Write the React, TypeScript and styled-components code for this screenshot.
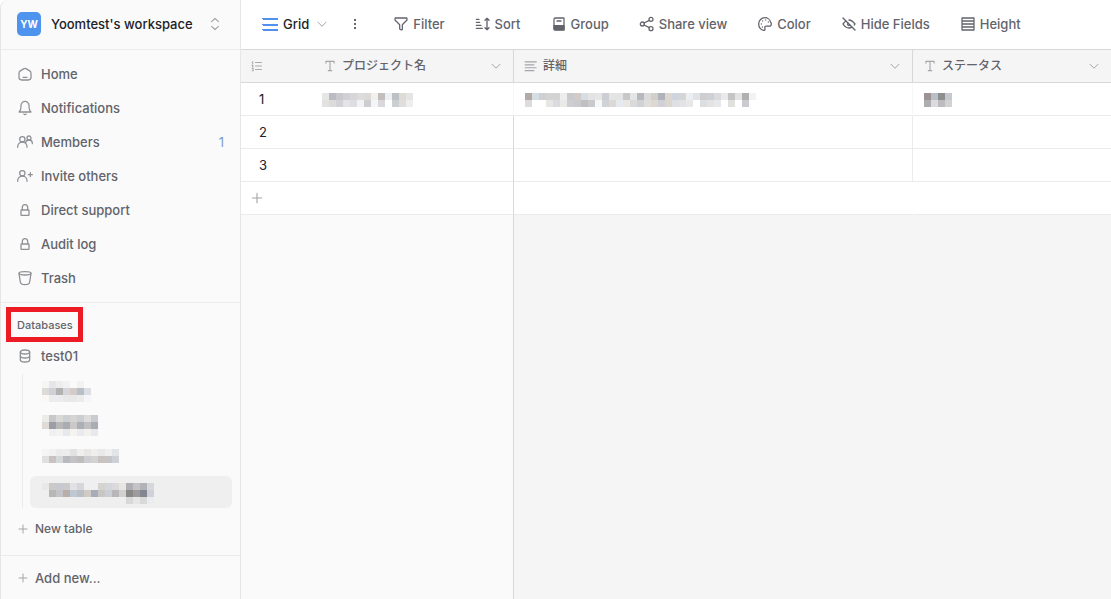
import React from 'react';
import styled, { createGlobalStyle } from 'styled-components';

const GlobalStyle = createGlobalStyle`
  *, *::before, *::after { box-sizing: border-box; }
  body {
    margin: 0;
    background: #fff;
    color: #202128;
    font-family: Inter, "Noto Sans CJK JP", sans-serif;
    font-size: 13px;
    line-height: 20px;
    font-weight: 500;
  }
  button {
    margin: 0;
    padding: 0;
    border: 0;
    background: none;
    font: inherit;
    color: inherit;
    cursor: pointer;
  }
  a { color: inherit; text-decoration: none; }
  ul { margin: 0; padding: 0; list-style: none; }
  svg { display: block; flex: none; }
`;

/* ---------- icons ---------- */

const Svg = styled.svg<{ $size?: number; $weight?: number }>`
  width: ${(p) => p.$size ?? 16}px;
  height: ${(p) => p.$size ?? 16}px;
  fill: none;
  stroke: currentColor;
  stroke-width: ${(p) => p.$weight ?? 1.9};
  stroke-linecap: round;
  stroke-linejoin: round;
`;

type IconProps = { paths: string[]; size?: number; weight?: number };

const Icon = ({ paths, size, weight }: IconProps) => (
  <Svg viewBox="0 0 24 24" $size={size} $weight={weight} aria-hidden="true">
    {paths.map((d) => (
      <path key={d} d={d} />
    ))}
  </Svg>
);

const person = [
  'M1 20V19C1 15.134 4.134 12 8 12C11.866 12 15 15.134 15 19V20',
  'M8 12C10.209 12 12 10.209 12 8C12 5.791 10.209 4 8 4C5.791 4 4 5.791 4 8C4 10.209 5.791 12 8 12Z',
];

const icons = {
  home: [
    'M17 21H7C4.791 21 3 19.209 3 17V10.708C3 9.309 3.731 8.012 4.927 7.287L9.927 4.256C11.201 3.484 12.799 3.484 14.073 4.256L19.073 7.287C20.269 8.012 21 9.309 21 10.708V17C21 19.209 19.209 21 17 21Z',
    'M9 17H15',
  ],
  bell: [
    'M18 8.4C18 6.703 17.368 5.075 16.243 3.875C15.117 2.674 13.591 2 12 2C10.409 2 8.883 2.674 7.757 3.875C6.632 5.075 6 6.703 6 8.4C6 15.867 3 18 3 18H21C21 18 18 15.867 18 8.4Z',
    'M13.73 21C13.37 21.62 12.71 22 12 22C11.29 22 10.63 21.62 10.27 21',
  ],
  members: [
    ...person,
    'M13 14C13 11.239 15.239 9 18 9C20.761 9 23 11.239 23 14V14.5',
    'M18 9C19.657 9 21 7.657 21 6C21 4.343 19.657 3 18 3C16.343 3 15 4.343 15 6C15 7.657 16.343 9 18 9Z',
  ],
  invite: [...person, 'M17 10H23M20 7V13'],
  lock: [
    'M16 12H17.4C17.731 12 18 12.269 18 12.6V19.4C18 19.731 17.731 20 17.4 20H6.6C6.269 20 6 19.731 6 19.4V12.6C6 12.269 6.269 12 6.6 12H8M16 12V8C16 6.667 15.2 4 12 4C8.8 4 8 6.667 8 8V12M16 12H8',
  ],
  trash: [
    'M3 5C3 3.600 7 2.500 12 2.500C17 2.500 21 3.600 21 5C21 6.400 17 7.500 12 7.500C7 7.500 3 6.400 3 5Z',
    'M3 5L5 18C5.300 20.800 8.500 22 12 22C15.500 22 18.700 20.800 19 18L21 5',
  ],
  database: [
    'M5 12V18C5 18 5 21 12 21C19 21 19 18 19 18V12',
    'M5 6V12C5 12 5 15 12 15C19 15 19 12 19 12V6',
    'M12 3C19 3 19 6 19 6C19 6 19 9 12 9C5 9 5 6 5 6C5 6 5 3 12 3Z',
  ],
  plus: ['M4 12H20M12 4V20'],
  upDown: ['M6 8L12 2.500L18 8', 'M6 16L12 21.500L18 16'],
  chevron: ['M4 8.500L12 16.500L20 8.500'],
  filter: [
    'M4 3H20C20.552 3 21 3.448 21 4V5.586C21 5.851 20.895 6.105 20.707 6.293L14.293 12.707C14.105 12.895 14 13.149 14 13.414V19.719C14 20.370 13.388 20.847 12.757 20.689L10.757 20.189C10.312 20.078 10 19.678 10 19.219V13.414C10 13.149 9.895 12.895 9.707 12.707L3.293 6.293C3.105 6.105 3 5.851 3 5.586V4C3 3.448 3.448 3 4 3Z',
  ],
  sort: [
    'M2 5H6M2 9.500H7M2 14H9M2 18.500H11',
    'M18 3.500V20.500M15 6.500L18 3.500L21 6.500M15 17.500L18 20.500L21 17.500',
  ],
  share: [
    'M18 22C19.657 22 21 20.657 21 19C21 17.343 19.657 16 18 16C16.343 16 15 17.343 15 19C15 20.657 16.343 22 18 22Z',
    'M18 8C19.657 8 21 6.657 21 5C21 3.343 19.657 2 18 2C16.343 2 15 3.343 15 5C15 6.657 16.343 8 18 8Z',
    'M5 15C6.657 15 8 13.657 8 12C8 10.343 6.657 9 5 9C3.343 9 2 10.343 2 12C2 13.657 3.343 15 5 15Z',
    'M15.500 6.500L7.500 10.500M7.500 13.500L15.500 17.500',
  ],
  palette: [
    'M20.510 9.540C19.550 5.380 15.500 2.500 12 2.500C6.700 2.500 2.500 6.700 2.500 12C2.500 17.200 6 21.500 10 21.500C11.500 21.500 12.300 20.600 12 19.500L11.700 18C11.400 16.400 12.400 15.200 14 15.200H18.500C20.500 15.200 21.500 13.400 21.500 11.500C21.500 10.800 21 10 20.510 9.540Z',
    'M6.500 12.010V12M8.500 7.510V7.500M13 6.010V6M17 9.010V9M8 16.510V16.500',
  ],
  eyeOff: [
    'M3 3L21 21',
    'M10.500 10.677C9.640 11.510 9.700 12.730 10.480 13.520C11.300 14.330 12.500 14.300 13.323 13.500',
    'M7.362 7.561C5.680 8.740 4.279 10.420 3 12C4.889 14.991 8.282 18 12 18C13.550 18 14.998 17.490 16.287 16.704M12 6C16.008 6 18.701 9.158 21 12C20.681 12.499 20.320 12.998 19.922 13.482',
  ],
  height: [
    'M3 3H21V21H3ZM3 7.500H21M3 12H21M3 16.500H21',
  ],
  text: ['M5 7V4H19V7M12 4V20M9 20H15'],
  longText: ['M2 5H21M2 10H17M2 15H21M2 20H17'],
  count: ['M9 5H21M9 12H21M9 19H21M2 4L3.500 3V8M2 10.500H4V12L2 14H4.500M2 17H4.500V21.500H2'],
};

const GridIcon = () => (
  <Svg viewBox="0 0 16 16" $weight={1} shapeRendering="crispEdges" aria-hidden="true">
    <path d="M0.500 2.500H15.500M0.500 8.500H15.500M0.500 13.500H15.500" strokeWidth="2" />
  </Svg>
);

const DotsIcon = () => (
  <Svg viewBox="0 0 16 16" aria-hidden="true">
    <path d="M7 3h2v2H7zM7 7h2v2H7zM7 11h2v2H7z" fill="currentColor" stroke="none" />
  </Svg>
);

const GroupIcon = () => (
  <Svg viewBox="0 0 24 24" aria-hidden="true">
    <path d="M4.500 19V5C4.500 3.895 5.300 3 6.500 3H19C19.331 3 19.500 3.269 19.500 3.600V20.500H6C5.200 20.500 4.500 19.900 4.500 19Z" />
    <path d="M4.500 14.500H19.500V21H6C5.100 21 4.500 20.200 4.500 19Z" fill="currentColor" />
    <path d="M9 7.500H15" />
  </Svg>
);

/* ---------- redacted text ---------- */

const CELL = 7;

const Mosaic = ({ rows }: { rows: string[] }) => {
  const cells = rows.map((row) => row.split(' '));
  const width = Math.max(...cells.map((c) => c.length)) * CELL;
  const height = cells.length * CELL;
  return (
    <svg width={width} height={height} shapeRendering="crispEdges" role="img" aria-label="redacted">
      {cells.map((row, y) =>
        row.map((color, x) =>
          color === '-' ? null : (
            <rect key={`${x}-${y}`} x={x * CELL} y={y * CELL} width={CELL} height={CELL} fill={`#${color}`} />
          ),
        ),
      )}
    </svg>
  );
};

const tables = [
  {
    rows: [
      'f5f5f3 e4e6e8 ededee f2f2f2 - f2f2f2 -',
      'dddbda cfd1d7 b2b2b2 d6d6da d4ccc7 b8bfc7 dcdee3',
      'faf7f5 ececee ececef e8e8e8 e9e9e9 ececec f5f6f9',
    ],
  },
  {
    rows: [
      'ebebea c8c8ca d9d9d8 cdcfd2 d4d4d4 cccdd0 dcdcdc c8cbd0',
      'e0dad4 9b9ea6 b8b8b9 a9adb2 ccc8c8 acb0b6 c0c0c2 a9adb3',
      '- eef0f2 f3f2f0 e6e8ec f5f2f0 e8eaee f3f1ef e6e8ec',
    ],
  },
  {
    rows: [
      'f5f5f5 f2f1ef ebebeb ededed e2e2e2 efeff0 e8e7e5 eeeeee e9e9ea efefef e3e4e6',
      'e0e0e0 c8c3c2 d4d8d8 b9bac0 c3c3c5 bfbebd cdcdd2 d3d3d4 c9c3c0 c5c5c8 cdd1d5',
    ],
  },
  {
    active: true,
    rows: [
      'e8e8e6 cccac9 c8c9cf cacacb e1e1e6 d6d6d8 efeff1 - d5d3cf d4d7da dadadc e9e5e1 aeafb5 c5c3c5 b2b3b7 d6d8de',
      '- b8b7b7 c3c3c8 b8afaa bdc8d2 bcbfc6 d1cbc5 a8acba c8c6c4 cbced2 b8b6b8 d2d1d2 8a8989 9f9b9d 828690 cfd0d8',
      '- - - - - - - - - - - - d8d8d8 e6e6e6 d9d9d9 ebecef',
    ],
  },
];

const firstRow = {
  name: [
    'e6e6e4 bbbcc3 c9c9cb d1d1d3 d7d7da dcdcdd dcdad8 f0f0ee c3bebb ebf0f7 bdc1c4 dedbd7 e4e4e4',
    'e3e2e0 dcdcdd d2d3d6 e4e4e5 dddee2 f1f3f5 cecdd1 f3f5f7 d9d8db - cccfd2 e0dedc eeeeee',
  ],
  detail: [
    'b3aaa4 d5dde5 d0d0d1 d3d3d3 d3d3d3 ededed c9cacf d1ccc9 d8dde1 e3e3e3 e6e6e7 cbcfd3 e4e4e4 e3e3e3 c7c7c8 e4e5e6 b7b8be dbdbdc d2cfcb b0b3bb dcd7cf cfd5de d5d5d6 ebeef3 dfe2e6 d0cdce cdd0d5 dbdbdd e9e9e9 c4c4c5 e3e3e3 b0b0b1 f3f3f3',
    'dddbdd - - e8e6e4 dadbdf ebe9e7 cdced2 cbcbcd bfc0c2 c9cacc f7f7f7 cfd2d6 dbd8d5 e6eaef e9e6e3 dadada d0d2d5 e0dedc ddd8d2 cfd1d6 dbd7cf dfe0e4 e3e3e4 e8e8e8 - dcdfe2 e5e3e1 e6e8ec - e2e0dd - cbcccf -',
  ],
  status: ['9c9494 b9bfc4 8d8e90 c6c8d0', 'adadb2 dddbdd bcbcbf d2d2d4'],
};

/* ---------- layout ---------- */

const Page = styled.div`
  display: flex;
  min-height: 100vh;
`;

const Sidebar = styled.aside`
  display: flex;
  flex: none;
  flex-direction: column;
  width: 241px;
  border: solid #e6e6e6;
  border-width: 0 1px;
  border-top-left-radius: 8px;
  background: #fafafa;
  color: #62636b;
`;

const Workspace = styled.button`
  display: flex;
  align-items: center;
  width: 100%;
  height: 50px;
  padding: 0 18px 2px 16px;
  border-bottom: 1px solid #ebebeb;
  color: #202128;
  text-align: left;
`;

const Avatar = styled.span`
  width: 24px;
  height: 24px;
  margin-right: 10px;
  border-radius: 5px;
  background: #4e94ef;
  color: #fff;
  font-size: 10px;
  font-weight: 700;
  line-height: 24px;
  text-align: center;
`;

const WorkspaceName = styled.span`
  flex: 1;
`;

const Muted = styled.span`
  display: flex;
  color: #a5a5aa;
`;

const Nav = styled.ul`
  padding: 7px 16px;
  border-bottom: 1px solid #ebebeb;
`;

const NavLink = styled.a<{ $height?: number }>`
  display: flex;
  align-items: center;
  gap: 8px;
  height: ${(p) => p.$height ?? 34}px;
  svg { color: #8f9095; }
`;

const Count = styled.span`
  margin-left: auto;
  color: #7c9cc6;
  font-weight: 400;
`;

const Databases = styled.section`
  padding: 4px 8px 0 5px;
`;

const SectionTitle = styled.h2`
  width: max-content;
  height: 35px;
  margin: 0;
  padding: 0 5px 0 6px;
  border: 5px solid #ed1c24;
  font-size: 11px;
  font-weight: 500;
  line-height: 26px;
`;

const DatabaseLink = styled(NavLink)`
  padding-left: 11px;
`;

const Tree = styled.ul`
  display: flex;
  flex-direction: column;
  gap: 2px;
  margin: 4px 0 4px 16px;
  padding-left: 7px;
  border-left: 1px solid #ebebeb;
`;

const TreeLink = styled.a<{ $active?: boolean }>`
  display: block;
  height: 32px;
  padding: 7px 12px;
  border-radius: 6px;
  background: ${(p) => (p.$active ? '#efefef' : 'transparent')};
`;

const AddButton = styled.button<{ $small?: boolean }>`
  display: flex;
  align-items: center;
  gap: 6px;
  height: ${(p) => (p.$small ? 34 : 43)}px;
  font-size: ${(p) => (p.$small ? 12 : 13)}px;
  padding-left: ${(p) => (p.$small ? 11 : 16)}px;
  svg { color: #a5a5aa; }
`;

const SidebarFoot = styled.footer`
  margin-top: auto;
  border-top: 1px solid #ebebeb;
`;

const Main = styled.main`
  display: flex;
  flex: 1;
  flex-direction: column;
  min-width: 0;
`;

const Toolbar = styled.header`
  display: flex;
  flex: none;
  align-items: center;
  gap: 30px;
  height: 50px;
  padding: 0 21px 2px;
  border-bottom: 1px solid #d7d8d9;
  color: #62636b;
`;

const ToolButton = styled.button`
  display: flex;
  align-items: center;
  gap: 4px;
  white-space: nowrap;
`;

const ViewButton = styled(ToolButton)`
  gap: 5px;
  margin-right: -11px;
  color: #202128;
  > svg { color: #5190ef; }
  ${Muted} { margin-left: 2px; }
`;

const Table = styled.table`
  flex: none;
  width: 100%;
  border-collapse: separate;
  border-spacing: 0;
  table-layout: fixed;
`;

const Col = styled.col<{ $width?: number }>`
  width: ${(p) => (p.$width ? `${p.$width}px` : 'auto')};
`;

const Th = styled.th<{ $divider?: boolean }>`
  height: 33px;
  padding: 0 11px 0 10px;
  border-bottom: 1px solid #d7d8d9;
  border-right: ${(p) => (p.$divider ? '1px solid #d7d8d9' : '0')};
  background: #f5f5f5;
  color: #62636b;
  font-size: 12px;
  font-weight: 500;
  text-align: left;
`;

const Field = styled.div`
  display: flex;
  align-items: center;
  gap: 5px;
  svg { color: #a5a5aa; }
  button { margin-left: auto; }
`;

const divider = { none: 'transparent', strong: '#d7d8d9', soft: '#ebebeb', faint: '#f7f7f7' };

const Td = styled.td<{ $divider?: keyof typeof divider }>`
  height: 33px;
  padding: 0 9px;
  border-bottom: 1px solid #ebebeb;
  border-right: ${(p) => (p.$divider ? `1px solid ${divider[p.$divider]}` : '0')};
  vertical-align: middle;
`;

const RowNumber = styled(Td)`
  padding-left: 18px;
  font-weight: 400;
`;

const Value = styled.div<{ $flush?: boolean }>`
  margin-top: 2px;
  padding-left: ${(p) => (p.$flush ? 0 : 2)}px;
`;

const Empty = styled.div`
  display: flex;
  flex: 1;
  background: #f5f5f5;
`;

const EmptyLeft = styled.div`
  width: 273px;
  border-right: 1px solid #d7d8d9;
  background: #fafafa;
`;

const navItems = [
  { label: 'Home', icon: icons.home },
  { label: 'Notifications', icon: icons.bell },
  { label: 'Members', icon: icons.members, count: 1 },
  { label: 'Invite others', icon: icons.invite },
  { label: 'Direct support', icon: icons.lock },
  { label: 'Audit log', icon: icons.lock },
  { label: 'Trash', icon: icons.trash },
];

const tools: { label: string; icon: React.ReactNode }[] = [
  { label: 'Filter', icon: <Icon paths={icons.filter} /> },
  { label: 'Sort', icon: <Icon paths={icons.sort} weight={2} /> },
  { label: 'Group', icon: <GroupIcon /> },
  { label: 'Share view', icon: <Icon paths={icons.share} /> },
  { label: 'Color', icon: <Icon paths={icons.palette} /> },
  { label: 'Hide Fields', icon: <Icon paths={icons.eyeOff} weight={2} /> },
  { label: 'Height', icon: <Icon paths={icons.height} /> },
];

const FieldHead = ({ label, icon }: { label: string; icon: string[] }) => (
  <Field>
    <Icon paths={icon} size={14} />
    {label}
    <button type="button" aria-label={`${label} options`}>
      <Icon paths={icons.chevron} size={12} weight={2} />
    </button>
  </Field>
);

export default function App() {
  return (
    <>
      <GlobalStyle />
      <Page>
        <Sidebar>
          <Workspace type="button">
            <Avatar>YW</Avatar>
            <WorkspaceName>Yoomtest's workspace</WorkspaceName>
            <Muted>
              <Icon paths={icons.upDown} size={14} weight={2} />
            </Muted>
          </Workspace>
          <nav>
            <Nav>
              {navItems.map((item) => (
                <li key={item.label}>
                  <NavLink href="#">
                    <Icon paths={item.icon} />
                    {item.label}
                    {item.count && <Count>{item.count}</Count>}
                  </NavLink>
                </li>
              ))}
            </Nav>
          </nav>
          <Databases>
            <SectionTitle>Databases</SectionTitle>
            <DatabaseLink href="#" $height={28}>
              <Icon paths={icons.database} />
              test01
            </DatabaseLink>
            <Tree>
              {tables.map((table, i) => (
                <li key={i}>
                  <TreeLink href="#" $active={table.active}>
                    <Mosaic rows={table.rows} />
                  </TreeLink>
                </li>
              ))}
            </Tree>
            <AddButton type="button" $small>
              <Icon paths={icons.plus} size={12} weight={2} />
              New table
            </AddButton>
          </Databases>
          <SidebarFoot>
            <AddButton type="button">
              <Icon paths={icons.plus} size={12} weight={2} />
              Add new...
            </AddButton>
          </SidebarFoot>
        </Sidebar>
        <Main>
          <Toolbar>
            <ViewButton type="button">
              <GridIcon />
              Grid
              <Muted>
                <Icon paths={icons.chevron} size={12} weight={2} />
              </Muted>
            </ViewButton>
            <ToolButton type="button" aria-label="View options">
              <DotsIcon />
            </ToolButton>
            {tools.map((tool) => (
              <ToolButton type="button" key={tool.label}>
                {tool.icon}
                {tool.label}
              </ToolButton>
            ))}
          </Toolbar>
          <Table>
            <colgroup>
              <Col $width={72} />
              <Col $width={201} />
              <Col $width={399} />
              <Col />
            </colgroup>
            <thead>
              <tr>
                <Th aria-label="Row">
                  <Field>
                    <Icon paths={icons.count} size={12} />
                  </Field>
                </Th>
                <Th $divider>
                  <FieldHead label="プロジェクト名" icon={icons.text} />
                </Th>
                <Th $divider>
                  <FieldHead label="詳細" icon={icons.longText} />
                </Th>
                <Th>
                  <FieldHead label="ステータス" icon={icons.text} />
                </Th>
              </tr>
            </thead>
            <tbody>
              <tr>
                <RowNumber>1</RowNumber>
                <Td $divider="faint">
                  <Value $flush>
                    <Mosaic rows={firstRow.name} />
                  </Value>
                </Td>
                <Td $divider="faint">
                  <Value>
                    <Mosaic rows={firstRow.detail} />
                  </Value>
                </Td>
                <Td>
                  <Value>
                    <Mosaic rows={firstRow.status} />
                  </Value>
                </Td>
              </tr>
              {[2, 3].map((n) => (
                <tr key={n}>
                  <RowNumber>{n}</RowNumber>
                  <Td $divider="strong" />
                  <Td $divider="soft" />
                  <Td />
                </tr>
              ))}
              <tr>
                <Td>
                  <Field as="button" type="button" aria-label="Add row">
                    <Icon paths={icons.plus} size={14} />
                  </Field>
                </Td>
                <Td $divider="strong" />
                <Td $divider="none" />
                <Td />
              </tr>
            </tbody>
          </Table>
          <Empty>
            <EmptyLeft />
          </Empty>
        </Main>
      </Page>
    </>
  );
}
